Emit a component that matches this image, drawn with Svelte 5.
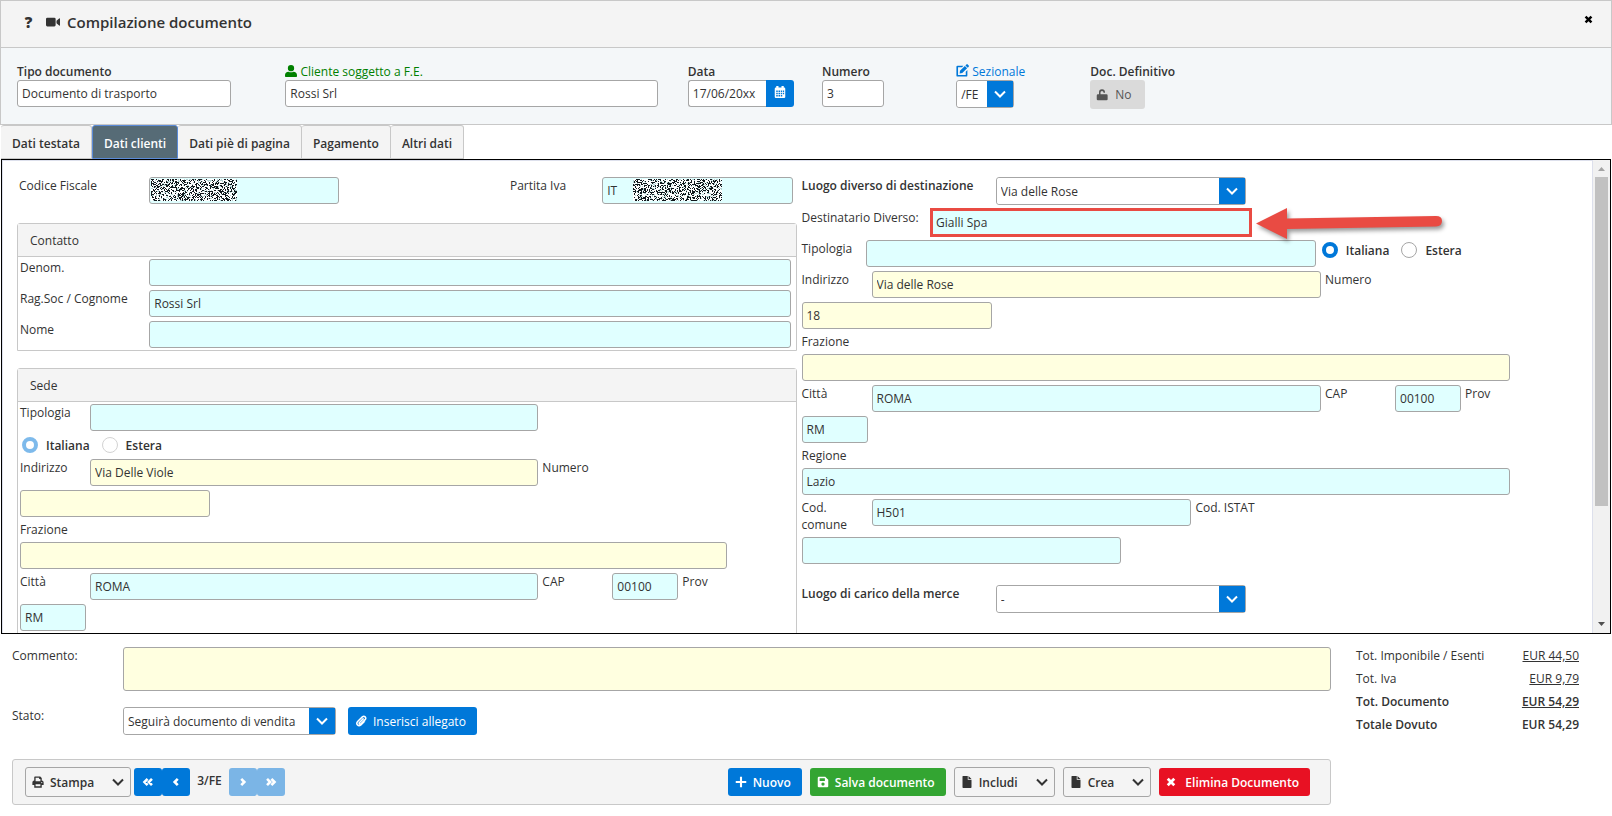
<script lang="ts">
	let activeTab = $state('Dati clienti');
	let sedeTipo = $state('italiana');
	let destTipo = $state('italiana');

	const tabs = ['Dati testata', 'Dati clienti', 'Dati piè di pagina', 'Pagamento', 'Altri dati'];

	const totals = [
		{ label: 'Tot. Imponibile / Esenti', value: 'EUR 44,50', link: true, bold: false },
		{ label: 'Tot. Iva', value: 'EUR 9,79', link: true, bold: false },
		{ label: 'Tot. Documento', value: 'EUR 54,29', link: true, bold: true },
		{ label: 'Totale Dovuto', value: 'EUR 54,29', link: false, bold: true }
	];

	// pixel grain that hides the private codes
	function grain(width: number, height: number, seed: number, density: number) {
		let s = seed;
		let d = '';
		for (let y = 0; y < height; y++) {
			for (let x = 0; x < width; x++) {
				s = (s * 1103515245 + 12345) % 2147483648;
				if (s / 2147483648 < density) d += `M${x} ${y}h1v1h-1z`;
			}
		}
		return d;
	}

	const icons: Record<string, string> = {
		user: 'M8 0a4 4 0 1 0 0 8.4A4 4 0 0 0 8 0zM4.6 9C2 9 0 10.800 0 13.500V15q0 1 1 1h14q1 0 1-1v-1.500C16 10.800 14 9 11.400 9Q8 10.600 4.600 9z',
		video: 'M1.500 3h8Q11 3 11 4.500v7Q11 13 9.500 13h-8Q0 13 0 11.500v-7Q0 3 1.500 3zM12 6.500L15 4q1-.5 1 .5v7q0 1-1 .5L12 9.500z',
		calendar: 'M1 3.500Q1 2 2.500 2H3V0h3v2h4V0h3v2h.5Q15 2 15 3.500v11Q15 16 13.500 16h-11Q1 16 1 14.500zM3 6v2h2V6zM6 6v2h2V6zM9 6v2h2V6zM12 6v2h1.500V6zM3 9v2h2V9zM6 9v2h2V9zM9 9v2h2V9zM12 9v2h1.500V9zM3 12v2h2v-2zM6 12v2h2v-2zM9 12v2h2v-2z',
		edit: 'M2 2h7L7.500 4H2.500v9.500H12V9.500L14 7.500V14q0 1.500-1.500 1.500H2Q.5 15.500.5 14V3.500Q.5 2 2 2zM12.800.5q.8-.8 1.600 0l1.200 1.200q.8.800 0 1.600L14.500 4.500 11.600 1.700zM10.900 2.400l2.800 2.800-6 6-3.200.4.400-3.200z',
		lock: 'M2.500 7H4V4.500a4 4 0 0 1 8-.2V5h-2v-.5a2 2 0 0 0-4 0V7h8q1.500 0 1.500 1.500v5Q15.500 15 14 15H2.500Q1 15 1 13.500v-5Q1 7 2.500 7z',
		print: 'M3 6V1.500Q3 .5 4 .5h7l2 2V6q2.500 0 2.500 2.500V12H13v3.500H3V12H.500V8.500Q.5 6 3 6zM4.800 2.300V7h6.400V4H9.500V2.300zM4.800 11v2.700h6.400V11zM13 8a.8.8 0 1 0 0 1.600A.8.8 0 0 0 13 8z',
		save: 'M2.500 1H11l4 4v8.500Q15 15 13.500 15h-11Q1 15 1 13.500v-11Q1 1 2.500 1zM3.500 3v3.500h7V3zM8 8.500a2.200 2.200 0 1 0 0 4.400 2.200 2.200 0 0 0 0-4.400z',
		file: 'M2.500 0H9v5h5v10q0 1-1 1H3q-1 0-1-1V1q0-1 .5-1zM10 0l4 4h-4z',
		plus: 'M6.600 1h2.800v5.600H15v2.800H9.400V15H6.600V9.400H1V6.600h5.600z',
		times: 'M4.300 1.200L8 4.900l3.700-3.700 3.100 3.100L11.100 8l3.700 3.700-3.100 3.100L8 11.100l-3.700 3.700-3.100-3.100L4.900 8 1.200 4.300z'
	};
</script>

{#snippet icon(name: string)}
	<svg class="icon" viewBox="0 0 16 16" aria-hidden="true"><path d={icons[name]} fill-rule="evenodd" /></svg>
{/snippet}

{#snippet chevron()}
	<svg class="chevron" viewBox="0 0 14 14" aria-hidden="true"><path d="M2 4.500L7 9.500L12 4.500" /></svg>
{/snippet}

{#snippet field(id: string, label: string, value: string, tone: string, size: string, labelClass = 'short')}
	<label class={labelClass} for={id}>{label}</label>
	<input {id} class="{tone} {size}" type="text" {value} />
{/snippet}

{#snippet dropdown(id: string, value: string)}
	<span class="dropdown">
		<select {id}><option>{value}</option></select>
		<span class="trigger">{@render chevron()}</span>
	</span>
{/snippet}

<div class="page">
	<header>
		<button class="plain" aria-label="Aiuto"><b class="help">?</b></button>
		<button class="plain video" aria-label="Video">{@render icon('video')}</button>
		<h1>Compilazione documento</h1>
		<button class="plain close" aria-label="Chiudi">
			<svg viewBox="0 0 16 16"><path d={icons.times} /></svg>
		</button>
	</header>

	<section class="summary">
		<div class="cell span2">
			<label for="tipo-doc"><b>Tipo documento</b></label>
			<input id="tipo-doc" class="grow" type="text" value="Documento di trasporto" />
		</div>
		<div class="cell span3">
			<label class="green" for="cliente">{@render icon('user')} Cliente soggetto a F.E.</label>
			<input id="cliente" class="grow" type="text" value="Rossi Srl" />
		</div>
		<div class="cell">
			<label for="data"><b>Data</b></label>
			<span class="date">
				<input id="data" type="text" value="17/06/20xx" />
				<button aria-label="Calendario">
					{@render icon('calendar')}
				</button>
			</span>
		</div>
		<div class="cell number">
			<label for="numero"><b>Numero</b></label>
			<input id="numero" type="text" value="3" />
		</div>
		<div class="cell sezionale">
			<label class="blue" for="sezionale">{@render icon('edit')} Sezionale</label>
			{@render dropdown('sezionale', '/FE')}
		</div>
		<div class="cell">
			<label for="definitivo"><b>Doc. Definitivo</b></label>
			<button id="definitivo" class="toggle">{@render icon('lock')} No</button>
		</div>
	</section>

	<nav>
		{#each tabs as tab}
			<button class:active={activeTab === tab} onclick={() => (activeTab = tab)}>{tab}</button>
		{/each}
	</nav>

	<main>
		<div class="scroller">
			<div class="column">
				<div class="row codes">
					<label class="sixth" for="cf">Codice Fiscale</label>
					<span class="masked">
						<input id="cf" class="cyan" type="text" value="" />
						<svg class="grain" width="86" height="22" viewBox="0 0 86 22" shape-rendering="crispEdges">
							<rect width="86" height="22" fill="#fff" />
							<path d={grain(86, 22, 77, 0.22)} fill="#b4d4d4" />
							<path d={grain(86, 22, 1234, 0.36)} fill="#10181c" />
						</svg>
					</span>
					<label class="piva" for="piva">Partita Iva</label>
					<span class="masked">
						<input id="piva" class="cyan" type="text" value="IT" />
						<svg class="grain second" width="89" height="22" viewBox="0 0 89 22" shape-rendering="crispEdges">
							<rect width="89" height="22" fill="#fff" />
							<path d={grain(89, 22, 991, 0.22)} fill="#b4d4d4" />
							<path d={grain(89, 22, 5678, 0.36)} fill="#10181c" />
						</svg>
					</span>
				</div>

				<div class="panel">
					<h2>Contatto</h2>
					<div class="rows">
						<div class="row">{@render field('denom', 'Denom.', '', 'cyan', 'w10', 'sixth')}</div>
						<div class="row">{@render field('ragsoc', 'Rag.Soc / Cognome', 'Rossi Srl', 'cyan', 'w10', 'sixth')}</div>
						<div class="row">{@render field('nome', 'Nome', '', 'cyan', 'w10', 'sixth')}</div>
					</div>
				</div>

				<div class="panel sede">
					<h2>Sede</h2>
					<div class="rows">
						<div class="row">{@render field('sede-tipologia', 'Tipologia', '', 'cyan', 'w7')}</div>
						<div class="row radios faded">
							<label><input type="radio" name="sede" value="italiana" bind:group={sedeTipo} />Italiana</label>
							<label><input type="radio" name="sede" value="estera" bind:group={sedeTipo} />Estera</label>
						</div>
						<div class="row">
							{@render field('sede-indirizzo', 'Indirizzo', 'Via Delle Viole', 'yellow', 'w7')}
							<label class="short" for="sede-numero">Numero</label>
						</div>
						<div class="row"><input id="sede-numero" class="yellow w3" type="text" /></div>
						<label for="sede-frazione">Frazione</label>
						<div class="row"><input id="sede-frazione" class="yellow w11" type="text" /></div>
						<div class="row">
							{@render field('sede-citta', 'Città', 'ROMA', 'cyan', 'w7')}
							{@render field('sede-cap', 'CAP', '00100', 'cyan', 'w1')}
							<label class="short" for="sede-prov">Prov</label>
						</div>
						<div class="row"><input id="sede-prov" class="cyan w1" type="text" value="RM" /></div>
					</div>
				</div>
			</div>

			<div class="column rows">
				<div class="row">
					<label class="quarter" for="luogo"><b>Luogo diverso di destinazione</b></label>
					{@render dropdown('luogo', 'Via delle Rose')}
				</div>
				<div class="row callout">
					{@render field('destinatario', 'Destinatario Diverso:', 'Gialli Spa', 'cyan', 'w5 marked', 'sixth')}
					<svg class="arrow" width="196" height="46" viewBox="0 0 196 46" aria-hidden="true">
						<path d="M2 20.500L33 5V15.500L182 13q6 0 6 5t-6 5.500L33 26V36z" />
					</svg>
				</div>
				<div class="row">
					{@render field('tipologia', 'Tipologia', '', 'cyan', 'w7', 'twelfth')}
					<div class="radios">
						<label><input type="radio" name="dest" value="italiana" bind:group={destTipo} />Italiana</label>
						<label><input type="radio" name="dest" value="estera" bind:group={destTipo} />Estera</label>
					</div>
				</div>
				<div class="row">
					{@render field('indirizzo', 'Indirizzo', 'Via delle Rose', 'yellow', 'w7')}
					<label class="short" for="civico">Numero</label>
				</div>
				<div class="row"><input id="civico" class="yellow w3" type="text" value="18" /></div>
				<label for="frazione">Frazione</label>
				<div class="row"><input id="frazione" class="yellow w11" type="text" /></div>
				<div class="row">
					{@render field('citta', 'Città', 'ROMA', 'cyan', 'w7')}
					{@render field('cap', 'CAP', '00100', 'cyan', 'w1')}
					<label class="short" for="prov">Prov</label>
				</div>
				<div class="row"><input id="prov" class="cyan w1" type="text" value="RM" /></div>
				<label for="regione">Regione</label>
				<div class="row"><input id="regione" class="cyan w11" type="text" value="Lazio" /></div>
				<div class="row">
					{@render field('comune', 'Cod. comune', 'H501', 'cyan', 'w5')}
					<label for="istat">Cod. ISTAT</label>
				</div>
				<div class="row"><input id="istat" class="cyan w5" type="text" /></div>
				<div class="row carico">
					<label class="quarter" for="carico"><b>Luogo di carico della merce</b></label>
					{@render dropdown('carico', '-')}
				</div>
			</div>
		</div>
		<div class="scrollbar" aria-hidden="true">
			<svg viewBox="0 0 17 17"><path d="M5 11h7L8.500 7z" fill="#a3a3a3" /></svg>
			<div class="track"><div class="thumb"></div></div>
			<svg viewBox="0 0 17 17"><path d="M5 6h7L8.500 10z" fill="#505050" /></svg>
		</div>
	</main>

	<footer>
		<div class="left">
			<div class="line">
				<label for="commento">Commento:</label>
				<textarea id="commento" class="yellow"></textarea>
			</div>
			<div class="line stato">
				<label for="stato">Stato:</label>
				{@render dropdown('stato', 'Seguirà documento di vendita')}
				<button class="solid attach">
					<svg class="icon" viewBox="0 0 16 16" aria-hidden="true">
						<path class="stroke" d="M11.500 4.500L6 10q-1 1 0 1.800t1.800 0l5.700-5.600q1.700-2 0-3.700t-3.700 0L3.500 8.600q-2.200 2.600-.2 4.600t4.600 0l5.300-5.300" />
					</svg>
					Inserisci allegato
				</button>
			</div>

			<div class="toolbar">
				<button class="outline">{@render icon('print')}<span>Stampa</span>{@render chevron()}</button>
				<div class="pager">
					<button aria-label="Primo"><svg viewBox="0 0 16 16"><path d="M7.500 4.500L4 8l3.500 3.500M12.500 4.500L9 8l3.500 3.500" /></svg></button>
					<button aria-label="Precedente"><svg viewBox="0 0 16 16"><path d="M10 4.500L6.500 8l3.500 3.500" /></svg></button>
				</div>
				<span class="position">3/FE</span>
				<div class="pager">
					<button disabled aria-label="Successivo"><svg viewBox="0 0 16 16"><path d="M6 4.500L9.500 8L6 11.500" /></svg></button>
					<button disabled aria-label="Ultimo"><svg viewBox="0 0 16 16"><path d="M3.500 4.500L7 8l-3.500 3.500M8.500 4.500L12 8l-3.500 3.500" /></svg></button>
				</div>
				<div class="actions">
					<button class="solid">{@render icon('plus')}Nuovo</button>
					<button class="solid save">{@render icon('save')}Salva documento</button>
					<button class="outline">{@render icon('file')}<span>Includi</span>{@render chevron()}</button>
					<button class="outline">{@render icon('file')}<span>Crea</span>{@render chevron()}</button>
					<button class="solid delete">{@render icon('times')}Elimina Documento</button>
				</div>
			</div>
		</div>

		<dl>
			{#each totals as total}
				<div class:bold={total.bold}>
					<dt>{total.label}</dt>
					<dd>
						{#if total.link}<a href="#dettaglio">{total.value}</a>{:else}{total.value}{/if}
					</dd>
				</div>
			{/each}
		</dl>
	</footer>
</div>

<style>
	:global(body) {
		background: #fff;
	}

	.page {
		display: flex;
		flex-direction: column;
		height: 100vh;
		min-height: 560px;
		overflow: hidden;
		color: #333;
		font: 12px/17px 'Open Sans', 'Noto Sans', sans-serif;
	}

	.page * {
		box-sizing: border-box;
	}

	b,
	.bold {
		font-weight: 600;
	}

	button,
	input,
	select,
	textarea {
		margin: 0;
		font: inherit;
		color: inherit;
	}

	button {
		padding: 0;
		border: 0;
		cursor: pointer;
	}

	input[type='text'],
	select,
	textarea {
		height: 27px;
		min-width: 0;
		padding: 1px 4px;
		border: 1px solid #a6a6a6;
		border-radius: 3px;
		background: #fff;
		outline: none;
	}

	input[type='text'].cyan {
		background: #e0ffff;
	}

	input[type='text'].yellow,
	textarea.yellow {
		background: #ffffe0;
	}

	.icon {
		width: 12px;
		height: 12px;
		fill: currentColor;
	}

	.chevron {
		width: 14px;
		height: 14px;
		fill: none;
		stroke: currentColor;
		stroke-width: 2;
	}

	header {
		display: flex;
		align-items: center;
		height: 48px;
		flex: none;
		padding: 0 18px 4px 23px;
		border: 1px solid #c8c8c8;
		background: #f4f4f4;
	}

	.plain {
		background: none;
	}

	.help {
		display: block;
		width: 9px;
		font-size: 15px;
		font-weight: 800;
	}

	.video {
		display: flex;
		margin: 0 7px 0 13px;
	}

	.video .icon {
		width: 14px;
		height: 14px;
	}

	h1 {
		margin: 0;
		font-size: 15px;
		line-height: 20px;
		font-weight: 600;
	}

	.close {
		display: flex;
		margin-left: auto;
		padding-bottom: 6px;
	}

	.close svg {
		width: 9px;
		height: 9px;
	}

	.summary {
		display: grid;
		grid-template-columns: repeat(12, minmax(0, 1fr));
		flex: none;
		height: 77px;
		padding-top: 15px;
		border: 1px solid #c8c8c8;
		border-top: 0;
		background: #f4f7f9;
	}

	.cell {
		display: flex;
		flex-direction: column;
		align-items: flex-start;
		padding-left: 16px;
	}

	.span2 {
		grid-column: span 2;
		padding-right: 38px;
	}

	.span3 {
		grid-column: span 3;
		padding-right: 14px;
	}

	.cell label {
		white-space: nowrap;
	}

	.cell .grow {
		width: 100%;
	}

	.green {
		color: #008000;
	}

	.blue {
		color: #0078d9;
	}

	.green .icon,
	.blue .icon {
		vertical-align: -1px;
	}

	.blue .icon {
		width: 13px;
		height: 13px;
	}

	.date {
		display: flex;
		width: 106px;
	}

	.date input {
		flex: 1;
		border-right: 0;
		border-radius: 3px 0 0 3px;
	}

	.date button {
		width: 28px;
		border-radius: 0 3px 3px 0;
		background: #0078d9;
		color: #fff;
	}

	.number input {
		width: 62px;
	}

	.toggle {
		display: flex;
		align-items: center;
		gap: 7px;
		height: 29px;
		padding: 0 13px 0 6px;
		border-radius: 3px;
		background: #dadada;
		color: #555;
	}

	.dropdown {
		display: flex;
		width: 250px;
		height: 28px;
		border: 1px solid #a6a6a6;
		border-radius: 3px;
		background: #fff;
		position: relative;
	}

	.dropdown select {
		flex: 1;
		height: 26px;
		padding-right: 28px;
		border: 0;
		appearance: none;
	}

	.sezionale .dropdown {
		width: 58px;
	}

	.trigger {
		position: absolute;
		inset: 0 0 0 auto;
		display: flex;
		align-items: center;
		justify-content: center;
		width: 26px;
		background: #0078d9;
		color: #fff;
		pointer-events: none;
	}

	nav {
		display: flex;
		flex: none;
		height: 34px;
		padding-left: 1px;
	}

	nav button {
		padding: 2px 11px 0;
		border: 1px solid #c8c8c8;
		border-left: 0;
		border-radius: 3px 3px 0 0;
		background: #f4f4f4;
		font-weight: 600;
	}

	nav .active {
		border: 1px solid #5b8bd8;
		background: #566b76;
		color: #fff;
	}

	main {
		display: flex;
		flex: 1;
		min-height: 0;
		margin: 0 1px;
		border: 1px solid #000;
	}

	.scroller {
		display: grid;
		grid-template-columns: minmax(0, 779fr) minmax(0, 777fr);
		gap: 5px;
		flex: 1;
		padding: 16px 13px 0 14px;
		border: 1px solid #dde0ec;
		border-bottom: 0;
		overflow-y: auto;
		scrollbar-width: none;
	}

	.scrollbar {
		display: flex;
		flex-direction: column;
		width: 17px;
		background: #f1f1f1;
	}

	.track {
		flex: 1;
		padding: 0 2px;
	}

	.thumb {
		height: 75%;
		background: #c1c1c1;
	}

	.row {
		display: flex;
		align-items: flex-start;
	}

	.rows {
		display: flex;
		flex-direction: column;
		gap: 4px;
	}

	.row input[type='text'] {
		margin-right: 4px;
	}

	.row label {
		flex: none;
	}

	.row .short {
		width: 70px;
		padding-right: 12px;
	}

	.row .twelfth {
		width: calc(100% / 12);
	}

	.row .sixth {
		width: calc(100% / 6);
	}

	.row .quarter {
		width: 25%;
	}

	.w1 {
		width: 66px;
	}

	.w3 {
		width: calc(100% * 3 / 12 - 4px);
	}

	.w5 {
		width: calc(100% * 5 / 12 - 4px);
	}

	.w7 {
		width: calc(100% * 7 / 12 - 4px);
	}

	.w10 {
		width: calc(100% * 10 / 12 - 4px);
	}

	.w11 {
		width: calc(100% * 11 / 12 - 4px);
	}

	.codes {
		margin-bottom: 19px;
		padding-left: 2px;
	}

	.masked {
		position: relative;
		width: 25%;
	}

	.masked input[type='text'] {
		display: block;
		width: calc(100% - 4px);
	}

	.codes .piva {
		flex: 1;
		padding-left: 167px;
	}

	.grain {
		position: absolute;
		top: 2px;
		left: 2px;
	}

	.grain.second {
		left: 31px;
	}

	.panel {
		border: 1px solid #c8c8c8;
		border-radius: 3px 3px 0 0;
	}

	.sede {
		margin-top: 17px;
		padding-bottom: 16px;
	}

	.panel h2 {
		margin: 0;
		padding: 8px 12px 7px;
		border-bottom: 1px solid #c8c8c8;
		background: #f4f4f4;
		font-size: 12px;
		line-height: 17px;
		font-weight: 400;
	}

	.panel .rows {
		padding: 2px 0 2px 2px;
	}

	.radios {
		display: flex;
		align-items: center;
		gap: 12px;
		height: 20px;
		padding-left: 2px;
		font-weight: 600;
	}

	.radios label {
		display: flex;
		align-items: center;
		gap: 8px;
	}

	.radios input {
		width: 16px;
		height: 16px;
		border: 1px solid #a6a6a6;
		border-radius: 50%;
		background: #fff;
		appearance: none;
	}

	.radios input:checked {
		border: 4px solid #0078d9;
	}

	.faded input {
		opacity: 0.5;
	}

	.callout {
		position: relative;
	}

	.row input[type='text'].marked {
		border-radius: 0;
		outline: 3px solid #e94b43;
		outline-offset: -2px;
	}

	.arrow {
		position: absolute;
		top: -6px;
		left: calc(100% * 7 / 12 - 1px);
		fill: #e94b43;
		filter: drop-shadow(2px 3px 2px rgba(0, 0, 0, 0.4));
	}

	.carico {
		margin-top: 17px;
	}

	footer {
		display: grid;
		grid-template-columns: minmax(0, 1fr) 223px;
		gap: 25px;
		flex: none;
		padding: 13px 33px 11px 12px;
	}

	.line {
		display: flex;
		align-items: flex-start;
	}

	.line label {
		flex: none;
		width: 111px;
	}

	.line textarea {
		flex: 1;
		height: 44px;
		resize: none;
	}

	.stato {
		margin: 16px 0 24px;
	}

	.stato .dropdown {
		width: 213px;
		margin-right: 12px;
	}

	.solid {
		display: flex;
		align-items: center;
		gap: 6px;
		height: 28px;
		padding: 0 11px 0 7px;
		border-radius: 3px;
		background: #0078d9;
		color: #fff;
		font-weight: 600;
		white-space: nowrap;
	}

	.attach {
		font-weight: 400;
	}

	.stroke {
		fill: none;
		stroke: #fff;
		stroke-width: 2;
	}

	.save {
		background: #33a532;
	}

	.delete {
		gap: 9px;
		background: #e81123;
	}

	.delete .icon {
		width: 10px;
	}

	.toolbar {
		display: flex;
		align-items: center;
		height: 46px;
		padding: 0 20px 0 12px;
		border: 1px solid #c8c8c8;
		border-radius: 3px;
		background: #f4f4f4;
	}

	.outline {
		display: flex;
		align-items: center;
		gap: 6px;
		height: 30px;
		padding: 0 5px 0 6px;
		border: 1px solid #a6a6a6;
		border-radius: 3px;
		background: #f4f4f4;
		font-weight: 600;
	}

	.outline .chevron {
		margin-left: 11px;
	}

	.pager {
		display: flex;
		margin-left: 3px;
	}

	.pager button {
		display: flex;
		align-items: center;
		justify-content: center;
		width: 28px;
		height: 28px;
		border-radius: 3px;
		background: #0078d9;
	}

	.pager button:disabled {
		background: #7bb5e6;
	}

	.pager svg {
		width: 14px;
		height: 14px;
		fill: none;
		stroke: #fff;
		stroke-width: 3;
	}

	.position {
		margin: 0 4px 3px 7px;
		font-weight: 600;
	}

	.actions {
		display: flex;
		align-items: center;
		gap: 8px;
		margin-left: auto;
	}

	dl {
		display: flex;
		flex-direction: column;
		gap: 6px;
		margin: 0;
	}

	dl div {
		display: flex;
		justify-content: space-between;
	}

	dd {
		margin: 0;
	}

	a {
		color: inherit;
	}
</style>
